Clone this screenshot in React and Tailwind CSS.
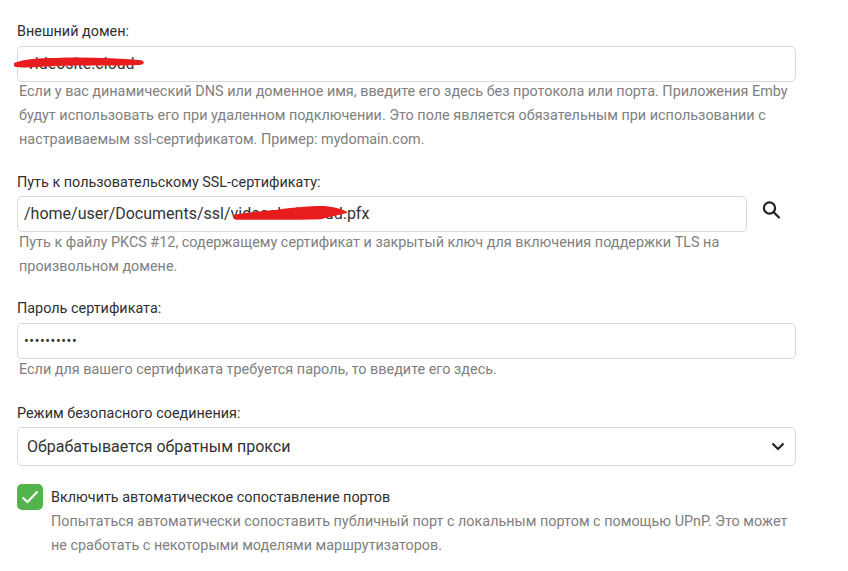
const fieldBox = "h-[36px] w-full rounded-[5px] border border-[#d9d9d9] bg-white flex items-center text-[16px] text-[#333]";

function Scribble({ className, d }) {
  return (
    <svg className={className} viewBox="0 0 130 12" fill="none" preserveAspectRatio="none">
      <path d={d} fill="#e81c1c" />
    </svg>
  );
}

function Label({ className = "mb-[4px]", children }) {
  return <div className={`text-[14.4px] leading-[20px] text-[#303030] ${className}`}>{children}</div>;
}

function Help({ className, children }) {
  return <div className={`text-[14.4px] leading-[24px] text-[#808080] pl-[2px] ${className}`}>{children}</div>;
}

export default function App() {
  return (
    <div className="min-h-[571px] bg-white pt-[22px] pl-[17px] pr-[52px] font-['Roboto',sans-serif]">
      <section className="mb-[21px]">
        <Label>Внешний домен:</Label>
        <div className={`${fieldBox} relative px-[9px]`}>
          <span>videosite.cloud</span>
          <Scribble
            className="absolute left-[-4px] top-[10px] w-[130px] h-[12px]"
            d="M0 6 C10 2 24 1 42 1 C70 0 100 1 126 3 C131 4 131 7 126 8 C100 9 70 8 42 9 C24 10 8 11 2 10 C-1 9 -1 7 0 6Z"
          />
        </div>
        <Help className="mt-[-2px]">
          Если у вас динамический DNS или доменное имя, введите его здесь без протокола или порта. Приложения Emby
          будут использовать его при удаленном подключении. Это поле является обязательным при использовании с
          настраиваемым ssl-сертификатом. Пример: mydomain.com.
        </Help>
      </section>

      <section className="mb-[20px]">
        <Label className="mb-[3px] mt-[1px]">Путь к пользовательскому SSL-сертификату:</Label>
        <div className="flex items-center">
          <div className={`${fieldBox} relative flex-1 px-[6px]`}>
            <span>/home/user/Documents/ssl/videoclod.cloud.pfx</span>
            <Scribble
              className="absolute left-[216px] top-[9px] w-[113px] h-[15px]"
              d="M0 7 C16 5 34 4 50 3 C70 1 88 0 100 0 C108 0 120 1 130 4.5 L130 5.5 C122 7 112 8 100 10.5 C80 11 40 11 2 11 C-1 10 -1 8 0 7Z"
            />
          </div>
          <div className="w-[49px] shrink-0 flex justify-center mb-[8px] pr-[2px]">
            <svg width="24" height="24" viewBox="0 0 24 24" fill="none" stroke="#222" strokeWidth="2.2" strokeLinecap="round">
              <circle cx="10.5" cy="10" r="5.6" />
              <path d="M15 14.5 L20 19.5" />
            </svg>
          </div>
        </div>
        <Help className="mt-[-1px]">
          Путь к файлу PKCS #12, содержащему сертификат и закрытый ключ для включения поддержки TLS на
          <br />
          произвольном домене.
        </Help>
      </section>

      <section className="mb-[22px]">
        <Label>Пароль сертификата:</Label>
        <div className={`${fieldBox} px-[6px]`}>
          <span className="text-[14px] tracking-[0.6px]">••••••••••</span>
        </div>
        <Help className="mt-[-1px]">Если для вашего сертификата требуется пароль, то введите его здесь.</Help>
      </section>

      <section className="mb-[18px]">
        <Label className="mb-[3px] mt-[1px]">Режим безопасного соединения:</Label>
        <div className={`${fieldBox} justify-between h-[39px] px-[9px]`}>
          <span>Обрабатывается обратным прокси</span>
          <svg width="14" height="9" viewBox="0 0 14 9" fill="none" stroke="#222" strokeWidth="2.2" className="mr-[1px]">
            <path d="M1.5 1.5 L7 7 L12.5 1.5" />
          </svg>
        </div>
      </section>

      <section className="flex items-start gap-[8px]">
        <div className="w-[26px] h-[26px] rounded-[5px] bg-[#52b54b] flex items-center justify-center shrink-0">
          <svg width="18" height="14" viewBox="0 0 18 14" fill="none" stroke="#fff" strokeWidth="2">
            <path d="M1.5 7.5 L6.5 12 L16.5 1.5" />
          </svg>
        </div>
        <div className="pt-[4px]">
          <div className="text-[14.4px] leading-[20px] text-[#303030]">Включить автоматическое сопоставление портов</div>
          <div className="text-[14.4px] leading-[24px] text-[#808080] mt-[2px]">
            Попытаться автоматически сопоставить публичный порт с локальным портом с помощью UPnP. Это может
            <br />
            не сработать с некоторыми моделями маршрутизаторов.
          </div>
        </div>
      </section>
    </div>
  );
}
